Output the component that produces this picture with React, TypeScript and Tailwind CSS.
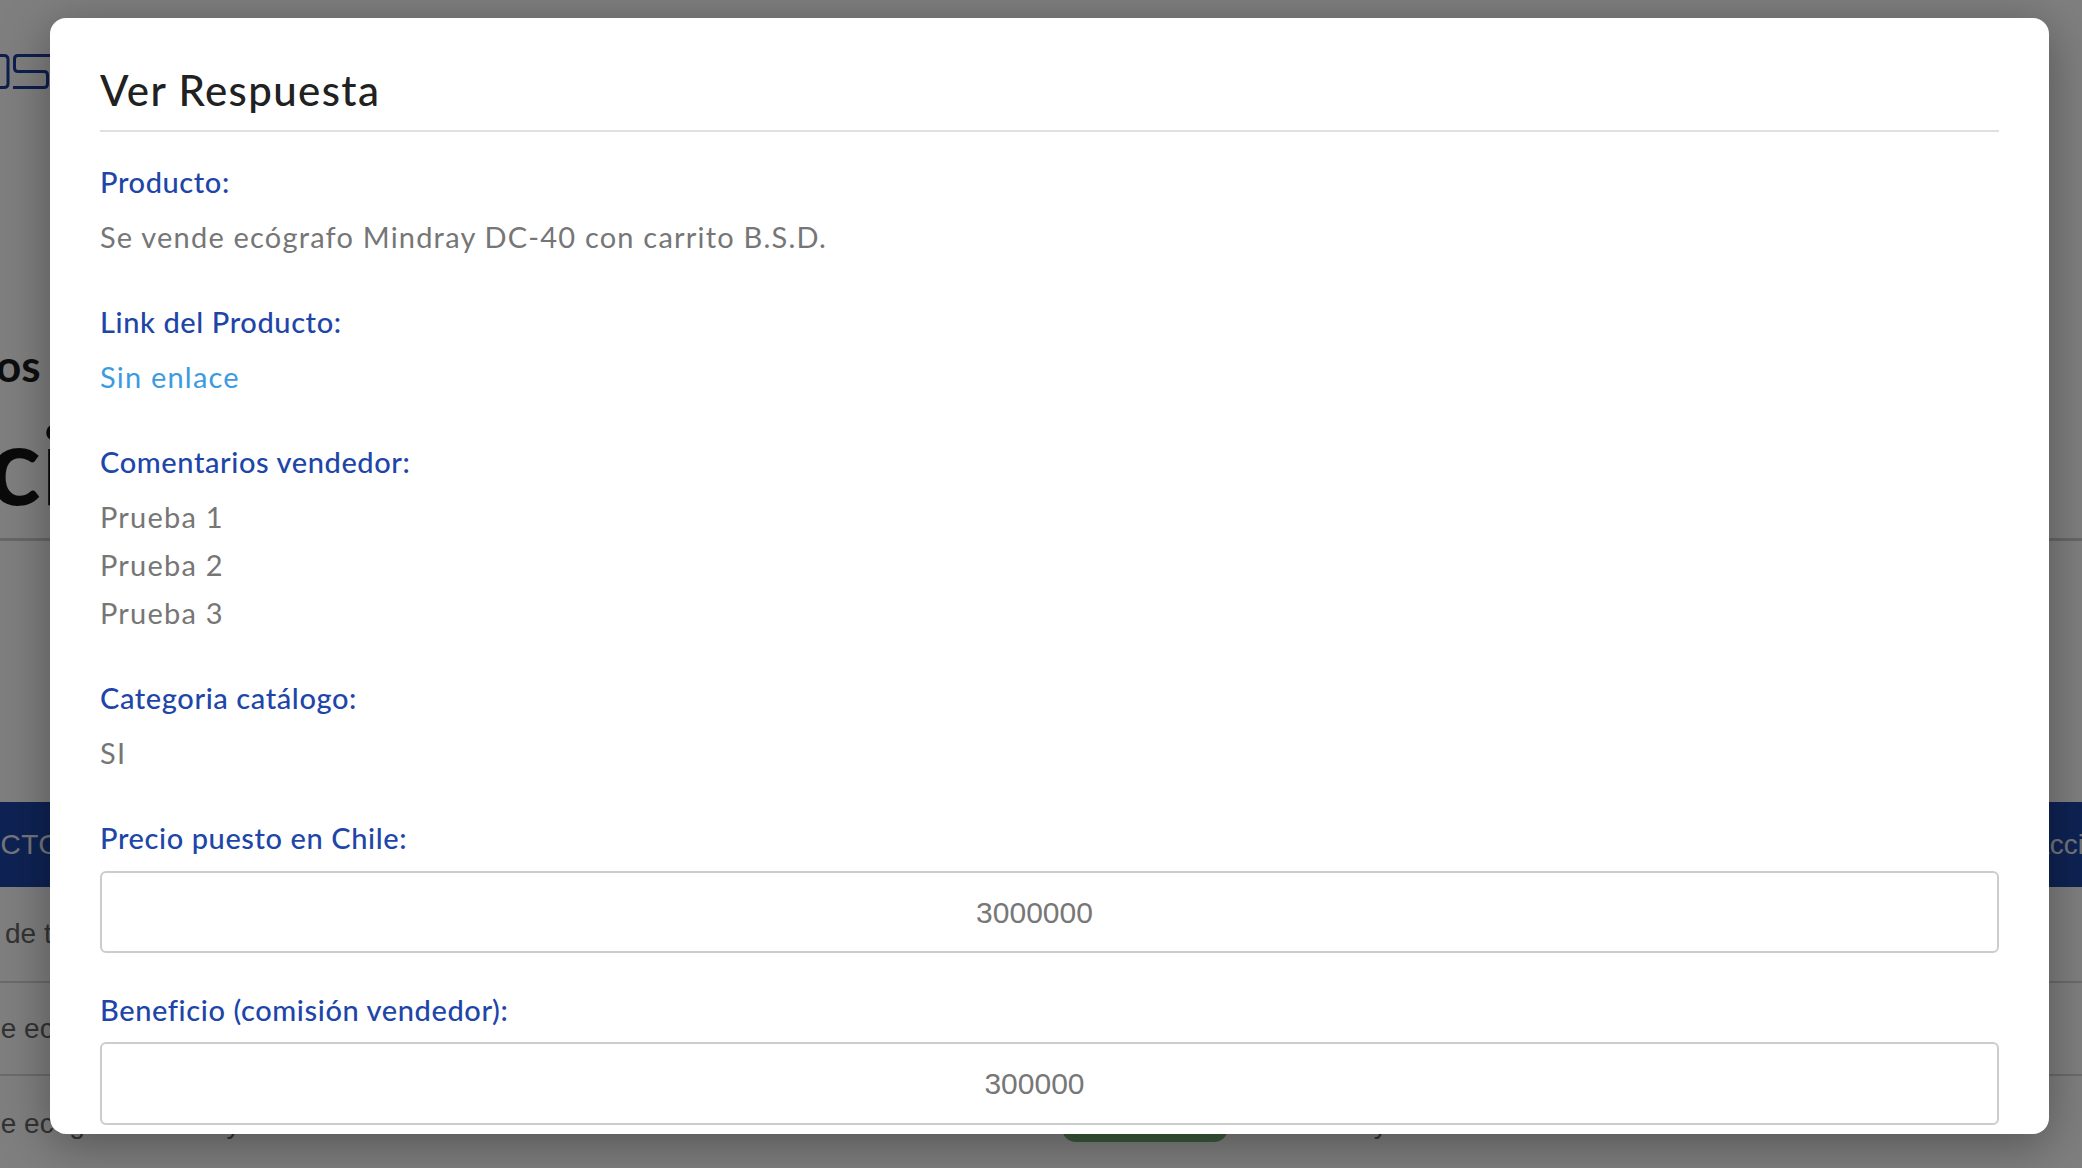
import React from "react";

const Label = ({ children }: { children: React.ReactNode }) => (
  <div className="text-[29px] leading-[48px] font-medium tracking-[0.6px] text-[#1d46a8]">{children}</div>
);

const Value = ({ children, className = "" }: { children: React.ReactNode; className?: string }) => (
  <div className={`text-[29px] leading-[48px] tracking-[1.2px] ${className}`}>{children}</div>
);

export default function App() {
  return (
    <div className="relative w-[2082px] h-[1168px] overflow-hidden bg-white font-['Liberation_Sans',sans-serif]">
      {/* Background page */}
      <div className="flex flex-col">
        <div className="h-[538px] flex flex-col">
          <div className="pt-[54px] h-[130px]">
            <svg width="60" height="36" viewBox="0 0 60 36">
              <path d="M0 1.5 H4 Q8 1.5 8 5.5 V29.5 Q8 33.5 4 33.5 H0" fill="none" stroke="#1d3f9c" strokeWidth="3" />
              <path d="M60 1.5 H18 Q14.5 1.5 14.5 5 V14 Q14.5 17.5 18 17.5 H44 Q47.5 17.5 47.5 21 V30 Q47.5 33.5 44 33.5 H13" fill="none" stroke="#1d3f9c" strokeWidth="3" />
            </svg>
          </div>
          <div className="mt-[213px] text-[44px] leading-[44px] font-bold text-[#1c1c1c] -ml-[4px] font-['Lato',sans-serif] whitespace-nowrap">
            os Realizados
          </div>
          <div className="mt-[20px] text-[110px] leading-[110px] font-bold text-[#151515] -ml-[12px] font-['Lato',sans-serif] whitespace-nowrap">
            ci
          </div>
        </div>
        <div className="h-[3px] bg-[#cfcfcf]" />
        <div className="h-[261px]" />
        <div className="h-[85px] bg-[#1d46a8] flex items-center justify-between text-[28px] text-[#e8ecf6] whitespace-nowrap">
          <span className="-ml-[103px] tracking-[0.5px]">PRODUCTO</span>
          <span className="w-[51px]">Acciones</span>
        </div>
        <div className="h-[96px] border-b-2 border-[#d6d6d6] flex items-center text-[28px] text-[#666666] whitespace-nowrap">
          <span className="ml-[5px]">de t</span>
        </div>
        <div className="h-[93px] border-b-2 border-[#d6d6d6] flex items-center text-[28px] text-[#666666] whitespace-nowrap">
          <span className="-ml-[102px]">Se vende ecógrafo Mindray DC-40</span>
        </div>
        <div className="h-[96px] flex items-center text-[28px] text-[#666666] whitespace-nowrap">
          <div className="-ml-[102px] w-[1164px] shrink-0">Se vende ecógrafo Mindray DC-40 con carrito</div>
          <div className="w-[166px] h-[36px] rounded-[14px] bg-[#76b276] shrink-0" />
          <div className="ml-[110px]">Rey</div>
        </div>
      </div>

      {/* Overlay */}
      <div className="absolute inset-0 bg-black/50 pl-[50px] pt-[18px]">
        <div className="w-[1999px] h-[1116px] bg-white rounded-[16px] overflow-hidden shadow-[0_10px_50px_rgba(0,0,0,0.35)] px-[50px] pt-[44px] font-['Lato',sans-serif]">
          <div className="text-[42px] leading-[56px] font-medium tracking-[1.4px] text-[#212121]">Ver Respuesta</div>
          <div className="mt-[12px] h-[2px] bg-[#e0e0e0]" />

          <div className="mt-[26px]">
            <Label>Producto:</Label>
            <Value className="mt-[7px] text-[#767676]">Se vende ecógrafo Mindray DC-40 con carrito B.S.D.</Value>
          </div>

          <div className="mt-[37px]">
            <Label>Link del Producto:</Label>
            <Value className="mt-[7px] text-[#3c9be0]">Sin enlace</Value>
          </div>

          <div className="mt-[37px]">
            <Label>Comentarios vendedor:</Label>
            <div className="mt-[7px]">
              <Value className="text-[#767676]">Prueba 1</Value>
              <Value className="text-[#767676]">Prueba 2</Value>
              <Value className="text-[#767676]">Prueba 3</Value>
            </div>
          </div>

          <div className="mt-[37px]">
            <Label>Categoria catálogo:</Label>
            <Value className="mt-[7px] text-[#767676]">SI</Value>
          </div>

          <div className="mt-[37px]">
            <Label>Precio puesto en Chile:</Label>
            <div className="mt-[9px] h-[82px] border-2 border-[#cccccc] rounded-[6px] flex items-center justify-center pr-[30px] font-['Liberation_Sans',sans-serif] text-[30px] text-[#777777]">
              3000000
            </div>
          </div>

          <div className="mt-[33px]">
            <Label>Beneficio (comisión vendedor):</Label>
            <div className="mt-[8px] h-[83px] border-2 border-[#cccccc] rounded-[6px] flex items-center justify-center pr-[30px] font-['Liberation_Sans',sans-serif] text-[30px] text-[#777777]">
              300000
            </div>
          </div>
        </div>
      </div>
    </div>
  );
}
